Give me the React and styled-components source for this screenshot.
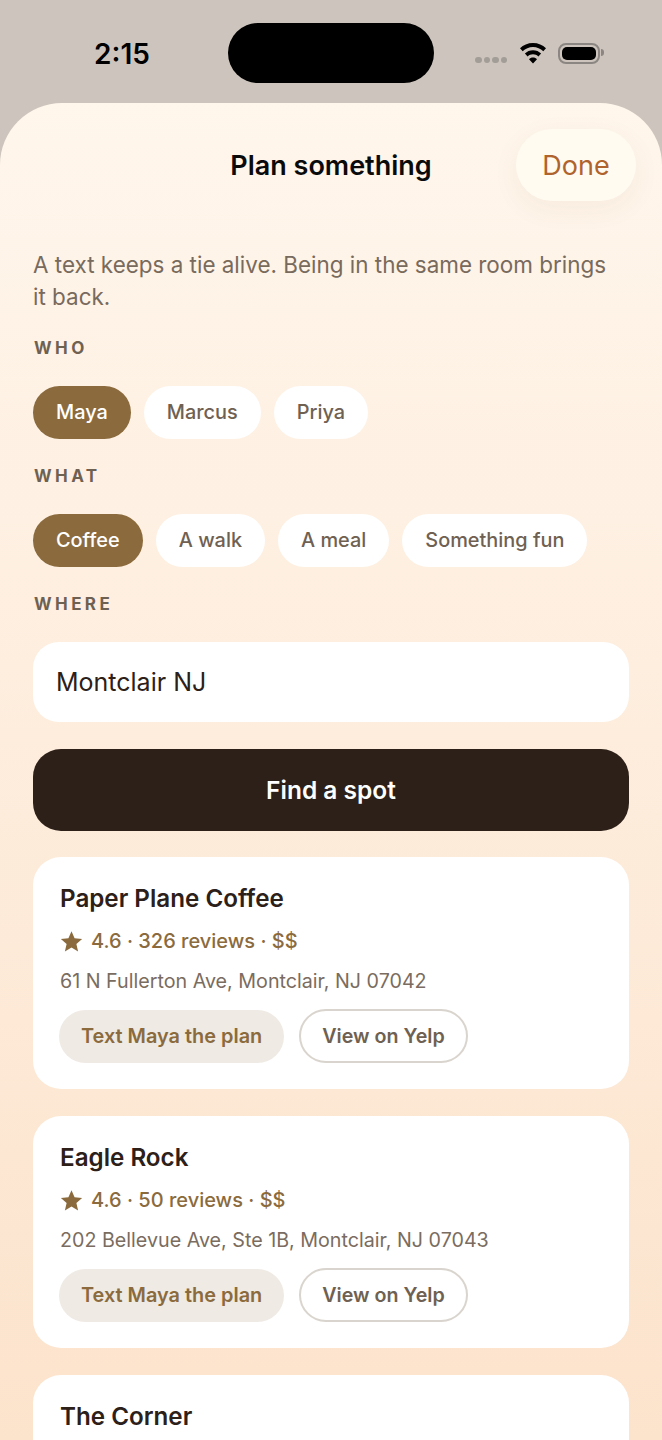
import React from 'react';
import styled, { createGlobalStyle } from 'styled-components';

const people = ['Maya', 'Marcus', 'Priya'];
const activities = ['Coffee', 'A walk', 'A meal', 'Something fun'];
const spots = [
  { name: 'Paper Plane Coffee', meta: '4.6 · 326 reviews · $$', address: '61 N Fullerton Ave, Montclair, NJ 07042' },
  { name: 'Eagle Rock', meta: '4.6 · 50 reviews · $$', address: '202 Bellevue Ave, Ste 1B, Montclair, NJ 07043' },
  { name: 'The Corner' },
];

const Star = () => (
  <StarIcon viewBox="0 0 24 24">
    <path d="M12 1.200l3.200 7.300 7.900.8-6 5.300 1.800 7.800-6.900-4.100-6.900 4.100 1.800-7.800-6-5.300 7.900-.8z" />
  </StarIcon>
);

const Wifi = () => (
  <svg width="28" height="21" viewBox="0 0 28 21">
    <path d="M14 0C8.800 0 4.300 2 1 5.300l2.700 2.900C6.400 5.500 10 3.900 14 3.900s7.600 1.600 10.300 4.300L27 5.300C23.700 2 19.200 0 14 0z" />
    <path d="M14 7.300c-3.200 0-6 1.200-8.100 3.300l2.700 2.900c1.400-1.400 3.300-2.300 5.400-2.300s4 .9 5.400 2.300l2.700-2.900C20 8.500 17.200 7.300 14 7.300z" />
    <path d="M14 14.500c-1.600 0-3 .6-4 1.700l4 4.300 4-4.300c-1-1.100-2.400-1.700-4-1.700z" />
  </svg>
);

const App = () => (
  <Screen>
    <GlobalStyle />
    <StatusBar>
      <Time>2:15</Time>
      <Island />
      <StatusIcons>
        <Dots>
          <Dot /><Dot /><Dot /><Dot />
        </Dots>
        <Wifi />
        <Battery>
          <BatteryFill />
        </Battery>
      </StatusIcons>
    </StatusBar>
    <Sheet>
      <Header>
        <Title>Plan something</Title>
        <DoneButton>Done</DoneButton>
      </Header>
      <Intro>A text keeps a tie alive. Being in the same room brings it back.</Intro>
      <Label>WHO</Label>
      <ChipRow>
        {people.map((p, i) => <Chip key={p} $active={i === 0}>{p}</Chip>)}
      </ChipRow>
      <Label>WHAT</Label>
      <ChipRow>
        {activities.map((a, i) => <Chip key={a} $active={i === 0}>{a}</Chip>)}
      </ChipRow>
      <Label>WHERE</Label>
      <WhereField>Montclair NJ</WhereField>
      <FindButton>Find a spot</FindButton>
      <Results>
        {spots.map((s) => (
          <Card key={s.name}>
            <SpotName>{s.name}</SpotName>
            {s.meta && <Rating><Star />{s.meta}</Rating>}
            {s.address && <Address>{s.address}</Address>}
            {s.address && (
              <Actions>
                <TextButton>Text Maya the plan</TextButton>
                <YelpButton>View on Yelp</YelpButton>
              </Actions>
            )}
          </Card>
        ))}
      </Results>
    </Sheet>
  </Screen>
);

const GlobalStyle = createGlobalStyle`
  html, body {
    margin: 0;
    padding: 0;
    background: #cdc5bd;
    overflow: hidden;
  }
  * {
    box-sizing: border-box;
  }
  body {
    font-family: Inter, "Liberation Sans", sans-serif;
  }
`;

const Screen = styled.div`
  width: 662px;
  height: 1440px;
  overflow: hidden;
  background: #cdc5bd;
`;

const StatusBar = styled.div`
  height: 103px;
  display: flex;
  align-items: flex-start;
  padding-top: 23px;
`;

const Time = styled.div`
  width: 228px;
  padding-top: 14px;
  text-align: center;
  padding-left: 16px;
  font-size: 28px;
  line-height: 34px;
  font-weight: 600;
  color: #000;
`;

const Island = styled.div`
  width: 206px;
  height: 60px;
  border-radius: 30px;
  background: #000;
`;

const StatusIcons = styled.div`
  display: flex;
  align-items: center;
  height: 60px;
  margin-left: 41px;
`;

const Dots = styled.div`
  display: flex;
  gap: 2px;
  margin-top: 14px;
  margin-right: 12px;
`;

const Dot = styled.span`
  width: 6.500px;
  height: 6.500px;
  border-radius: 50%;
  background: #a39d97;
`;

const Battery = styled.div`
  position: relative;
  width: 42px;
  height: 21px;
  margin-left: 11px;
  padding: 2px;
  border: 2px solid #8b8682;
  border-radius: 8px;
  &::after {
    content: '';
    position: absolute;
    right: -6px;
    top: 4px;
    width: 3px;
    height: 7px;
    border-radius: 0 3px 3px 0;
    background: #8b8682;
  }
`;

const BatteryFill = styled.div`
  width: 100%;
  height: 100%;
  border-radius: 5px;
  background: #000;
`;

const Sheet = styled.div`
  height: 1337px;
  padding: 26px 33px 0;
  border-radius: 62px 62px 0 0;
  background: linear-gradient(180deg, #fff6ec 0%, #fce3cc 100%);
`;

const Header = styled.div`
  position: relative;
  display: flex;
  justify-content: center;
  align-items: center;
  height: 72px;
`;

const Title = styled.div`
  font-size: 27px;
  font-weight: 600;
  color: #0a0a0a;
`;

const DoneButton = styled.div`
  position: absolute;
  right: -7px;
  top: 0;
  width: 120px;
  height: 72px;
  display: flex;
  align-items: center;
  justify-content: center;
  border-radius: 36px;
  background: #fffbf1;
  box-shadow: 0 8px 28px rgba(120, 80, 40, 0.06);
  font-size: 27px;
  color: #b0632c;
`;

const Intro = styled.p`
  height: 62px;
  margin: 48px 0 0;
  padding-right: 15px;
  font-size: 22.450px;
  line-height: 32px;
  color: #786a5c;
`;

const Label = styled.div`
  margin-top: 26px;
  padding-left: 1px;
  font-size: 17px;
  line-height: 23px;
  font-weight: 700;
  letter-spacing: 3.400px;
  color: #6f6152;
`;

const ChipRow = styled.div`
  display: flex;
  gap: 13px;
  margin-top: 26px;
`;

const Chip = styled.div`
  height: 53px;
  padding: 0 23px 1px;
  display: flex;
  align-items: center;
  border-radius: 26.500px;
  font-size: 19.900px;
  font-weight: 500;
  background: ${(p) => (p.$active ? '#8b6b3d' : '#ffffff')};
  color: ${(p) => (p.$active ? '#ffffff' : '#6f6152')};
`;

const WhereField = styled.div`
  margin-top: 26px;
  height: 80px;
  padding: 0 23px;
  display: flex;
  align-items: center;
  border-radius: 26px;
  background: #fff;
  font-size: 25px;
  color: #2c2018;
`;

const FindButton = styled.div`
  margin-top: 27px;
  height: 82px;
  display: flex;
  align-items: center;
  justify-content: center;
  border-radius: 28px;
  background: #2c2018;
  color: #fff;
  font-size: 24.500px;
  font-weight: 600;
`;

const Results = styled.div`
  display: flex;
  flex-direction: column;
  gap: 27px;
  margin-top: 26px;
`;

const Card = styled.div`
  height: 232px;
  padding: 25px 27px 0 26px;
  border-radius: 28px;
  background: #fff;
`;

const SpotName = styled.div`
  padding-left: 1px;
  font-size: 24.200px;
  line-height: 34px;
  font-weight: 560;
  color: #2c2018;
`;

const Rating = styled.div`
  display: flex;
  align-items: center;
  gap: 8px;
  margin-top: 9px;
  padding-left: 1px;
  font-size: 20px;
  line-height: 32px;
  font-weight: 500;
  color: #8b6b3d;
`;

const StarIcon = styled.svg`
  width: 23px;
  height: 23px;
  fill: #8b6b3d;
`;

const Address = styled.div`
  margin-top: 8px;
  padding-left: 1px;
  font-size: 19.700px;
  line-height: 32px;
  color: #7a6c5e;
`;

const Actions = styled.div`
  display: flex;
  align-items: center;
  gap: 15px;
  margin-top: 12px;
`;

const TextButton = styled.div`
  height: 53px;
  padding: 0 22px;
  display: flex;
  align-items: center;
  border-radius: 26.500px;
  background: #efeae4;
  color: #8b6b3d;
  font-size: 19.900px;
  font-weight: 600;
`;

const YelpButton = styled.div`
  height: 54px;
  padding: 0 21px;
  display: flex;
  align-items: center;
  border-radius: 27px;
  border: 2px solid #d9d4cd;
  color: #6f6152;
  font-size: 19.700px;
  font-weight: 600;
`;

export default App;
